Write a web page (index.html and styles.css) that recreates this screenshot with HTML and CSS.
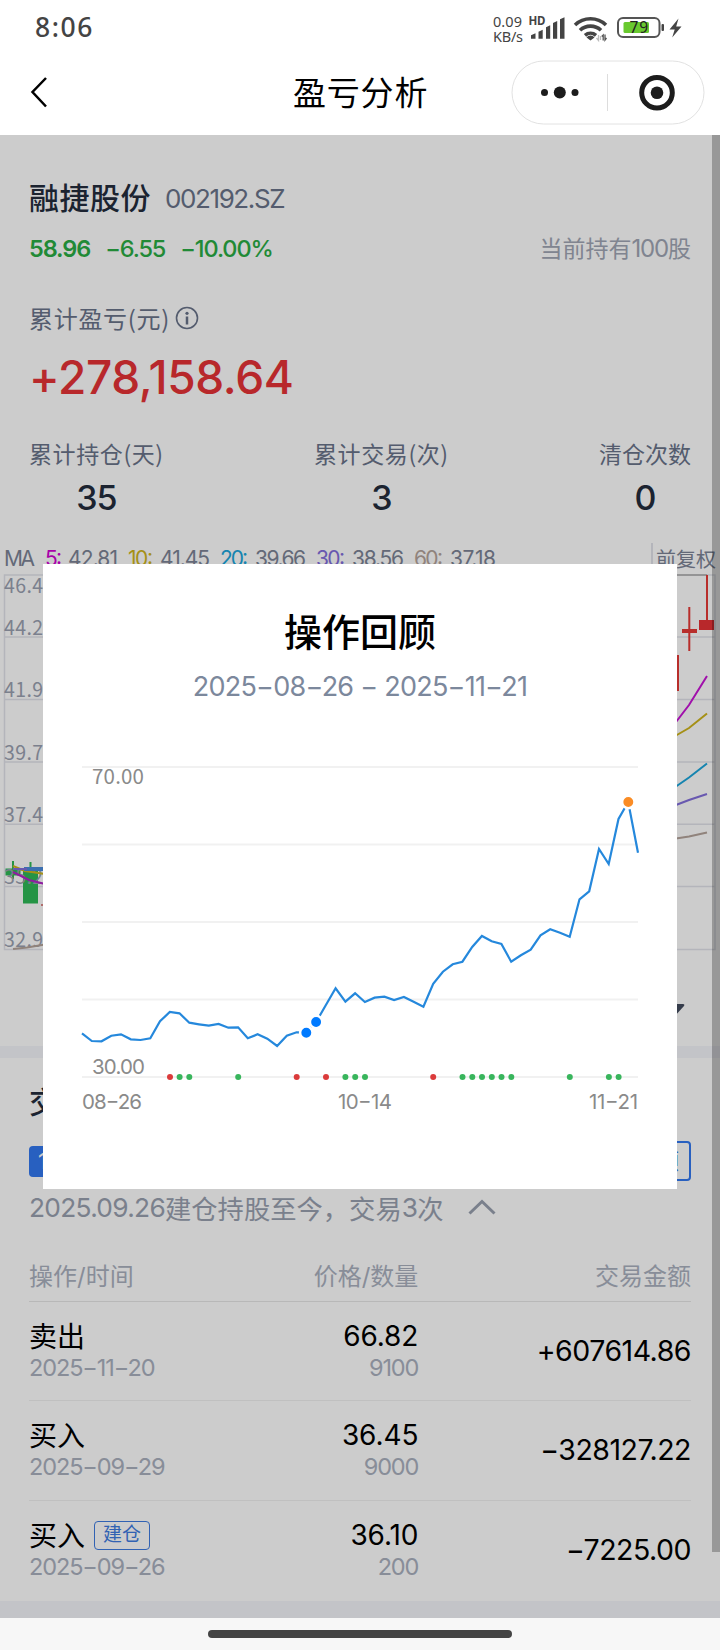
FILE: index.html
```html
<!DOCTYPE html>
<html lang="zh-CN">
<head>
    <meta charset="UTF-8">
    <title>盈亏分析</title>
    <link rel="stylesheet" href="styles.css">
</head>
<body>
<div class="status">
    <div class="time">8:06</div>
    <svg class="state" width="200" height="36" viewBox="485 8 200 36">
        <g fill="#444">
            <text x="493" y="26" font-size="14.5" textLength="29">0.09</text>
            <text x="493" y="40.5" font-size="14.5" textLength="30">KB/s</text>
            <text x="528.5" y="24" font-size="11.5" font-weight="bold" textLength="17">HD</text>
            <path d="M531 37.8v-3.500l4.500-2v5.500zM538.500 37.800v-7l4.200-2v9zM546 37.800v-11.500l4.200-2v13.500zM553 37.800v-15.800l4.200-2v17.800zM560 37.800v-19.500l4.500-2v21.500z"/>
        </g>
        <g fill="none" stroke="#444" stroke-width="3.600">
            <path d="M575 24a22.500 22.500 0 0 1 31 0"/>
            <path d="M580 29.300a15.300 15.300 0 0 1 21 0"/>
            <path d="M585 34.300a8.500 8.500 0 0 1 11 0"/>
        </g>
        <path d="M586.500 36.500a5 5 0 0 1 8 0l-4 3z" fill="#444"/>
        <path d="M598.500 34v5.500l-2-2.500M600.500 39v-4" fill="none" stroke="#bbb" stroke-width="1.300"/>
        <path d="M603.200 39.500v-5.500l-1.500 1.500M605 33.500v5.500l1.500-2" fill="none" stroke="#555" stroke-width="1.300"/>
        <rect x="618" y="17" width="41.500" height="19" rx="5" fill="#fff" stroke="#555" stroke-width="2"/>
        <rect x="623.500" y="21" width="25.500" height="11" rx="1.500" fill="#69c92f"/>
        <rect x="661.500" y="23" width="2.500" height="7" rx="1" fill="#444"/>
        <text x="629.500" y="32" font-size="15.500" fill="#222" textLength="18.500">79</text>
        <path d="M678.500 17.500L669.500 28.500h5.200l-2.500 8L681.500 25.500h-5.300z" fill="#444"/>
    </svg>
</div>
<div class="nav">
    <svg class="back" width="24" height="40" viewBox="0 0 24 40">
        <path d="M18 5L4.500 19L18 33.500" fill="none" stroke="#000" stroke-width="2.500"/>
    </svg>
    <div class="nav-title">盈亏分析</div>
    <svg class="capsule" width="194" height="66" viewBox="0 0 194 66">
        <rect x="1" y="1" width="192" height="63" rx="31.500" fill="#fff" stroke="#e2e2e2"/>
        <path d="M96.500 14v37" stroke="#ddd"/>
        <g fill="#1c1c1c">
            <circle cx="33.500" cy="32.500" r="3.500"/>
            <circle cx="48.800" cy="32.500" r="6"/>
            <circle cx="64" cy="32.500" r="3.500"/>
            <circle cx="146" cy="32.700" r="6.300"/>
        </g>
        <circle cx="146" cy="32.700" r="15.300" fill="none" stroke="#1c1c1c" stroke-width="5"/>
    </svg>
</div>

<div class="page">
    <div class="summary">
        <div class="stock"><b>融捷股份</b><span>002192.SZ</span></div>
        <div class="price">
            <span class="now">58.96</span><span class="diff">−6.55</span><span class="rate">−10.00%</span>
            <span class="hold">当前持有<em>100</em>股</span>
        </div>
        <div class="label">累计盈亏(元)
            <svg width="24" height="24" viewBox="0 0 24 24">
                <circle cx="12" cy="12" r="10.500" fill="none" stroke="#69738a" stroke-width="1.600"/>
                <circle cx="12" cy="7.300" r="1.600" fill="#69738a"/>
                <path d="M12 10.500v8" stroke="#69738a" stroke-width="2.500"/>
            </svg>
        </div>
        <div class="total">+278,158.64</div>
        <div class="stats">
            <div><p>累计持仓(天)</p><strong>35</strong></div>
            <div><p>累计交易(次)</p><strong>3</strong></div>
            <div><p>清仓次数</p><strong>0</strong></div>
        </div>
    </div>

    <svg class="kline" width="720" height="506" viewBox="0 540 720 506">
        <g font-size="21" fill="#7c8496">
            <text x="4" y="566" textLength="31">MA</text>
            <text x="45" y="566" fill="#d400d4" textLength="17">5:</text>
            <text x="68" y="566" textLength="50">42.81</text>
            <text x="128" y="566" fill="#cfb51c" textLength="25">10:</text>
            <text x="160" y="566" textLength="50">41.45</text>
            <text x="220" y="566" fill="#1ba6dc" textLength="28">20:</text>
            <text x="255" y="566" textLength="51">39.66</text>
            <text x="316" y="566" fill="#836fdc" textLength="29">30:</text>
            <text x="352" y="566" textLength="52">38.56</text>
            <text x="414" y="566" fill="#b5a49b" textLength="29">60:</text>
            <text x="450" y="566" textLength="46">37.18</text>
            <text x="656" y="567" font-size="20" textLength="60">前复权</text>
        </g>
        <g fill="none" stroke="#e2e3ea" stroke-width="1.500">
            <path d="M652 543v32" stroke-width="2"/>
            <path d="M4.500 575H715V949.500H4.500zM4.500 637H715M4.500 699.500H715M4.500 762H715M4.500 824.300H715M4.500 886.500H715"/>
        </g>
        <path d="M660 575h47" stroke="#aaa" stroke-width="1.500"/>
        <g fill="#2fb957">
            <rect x="5.500" y="868.500" width="15" height="7"/>
            <rect x="12" y="861" width="2" height="18"/>
            <rect x="23" y="871" width="15" height="32.500"/>
            <rect x="29.500" y="862" width="2" height="12"/>
        </g>
        <g class="axis" font-size="19.500" fill="#9aa1b1">
            <text x="4" y="593" textLength="39">46.4</text>
            <text x="4" y="635" textLength="39">44.2</text>
            <text x="4" y="697" textLength="39">41.9</text>
            <text x="4" y="760" textLength="39">39.7</text>
            <text x="4" y="822" textLength="39">37.4</text>
            <text x="4" y="884" textLength="39">35.2</text>
            <text x="4" y="947" textLength="39">32.9</text>
        </g>
        <g fill="none" stroke-width="2">
            <path d="M13 866l12 5l20 3" stroke="#cfb51c"/>
            <path d="M24 869h21" stroke="#4a8bdc" stroke-width="4"/>
            <path d="M13 869l14 0" stroke="#836fdc"/>
            <path d="M13 872l16 8l16 4" stroke="#b325c9"/>
            <path d="M13 949l14-1.500l18-3" stroke="#b5a49b"/>
            <path d="M41 905h5" stroke="#d88"/>
            <path d="M676 722l13-17l18-29" stroke="#c913d6"/>
            <path d="M676 735.500l13-7.500l18-14.500" stroke="#cfb51c"/>
            <path d="M676 786.500l13-9l18-14" stroke="#1ba6dc"/>
            <path d="M676 805l13-5l18-6" stroke="#836fdc"/>
            <path d="M676 838.500l13-2l18-4" stroke="#b5a49b"/>
            <path d="M678 655v36M689.300 607v44M707 575v46" stroke="#e73a36"/>
        </g>
        <rect x="682" y="629" width="15" height="4" fill="#e73a36"/>
        <rect x="699" y="620" width="15" height="10" fill="#e73336"/>
        <path d="M664 1004h19q2 0 1 2l-10 11z" fill="#434b5e"/>
    </svg>

    <div class="band"></div>

    <div class="trades">
        <h2>交易记录</h2>
        <div class="btns"><span class="tag">100股</span><span class="review">操作回顾</span></div>
        <div class="period"><em>2025.09.26</em>建仓持股至今，交易<em>3</em>次
            <svg width="28" height="16" viewBox="0 0 28 16">
                <path d="M1.500 14.500L14 2.500L26.500 14.500" fill="none" stroke="#99a1b0" stroke-width="3"/>
            </svg>
        </div>
        <div class="row head">
            <div>操作/时间</div><div>价格/数量</div><div>交易金额</div>
        </div>
        <div class="row">
            <div><p>卖出</p><time>2025−11−20</time></div>
            <div><p>66.82</p><time>9100</time></div>
            <div class="money">+607614.86</div>
        </div>
        <div class="row">
            <div><p>买入</p><time>2025−09−29</time></div>
            <div><p>36.45</p><time>9000</time></div>
            <div class="money">−328127.22</div>
        </div>
        <div class="row">
            <div><p>买入<i>建仓</i></p><time>2025−09−26</time></div>
            <div><p>36.10</p><time>200</time></div>
            <div class="money">−7225.00</div>
        </div>
    </div>
    <div class="band last"></div>
    <div class="scrollbar"></div>
    <div class="mask"></div>

    <div class="dialog">
        <h1>操作回顾</h1>
        <div class="range">2025−08−26 − 2025−11−21</div>
        <svg class="chart" width="634" height="390" viewBox="43 740 634 390">
            <path d="M82 767H638M82 844.500H638M82 922H638M82 999.500H638M82 1077H638" stroke="#f1f1f1" stroke-width="1.800"/>
            <g font-size="20.500" fill="#8a8a8a">
                <text class="axis" x="92" y="784" textLength="52">70.00</text>
                <text x="92" y="1074" textLength="53">30.00</text>
                <text x="82" y="1109" textLength="60">08−26</text>
                <text x="338" y="1109" textLength="54">10−14</text>
                <text x="589" y="1109" textLength="49">11−21</text>
            </g>
            <polyline fill="none" stroke="#2588dc" stroke-width="2.200" points="82,1033.300 91.800,1041 101.500,1041.300 111.300,1035.700 121,1034.300 130.800,1039.300 140.500,1040 150.300,1038.300 160,1021.300 169.800,1012 179.500,1013.300 189.300,1022.700 199,1024.300 208.800,1025.700 218.600,1024 228.300,1027.700 238.100,1027.300 247.800,1038.300 257.600,1034.300 267.300,1038.700 277.100,1046 286.800,1035.700 296.600,1032.300 306.300,1032.500 316.100,1022 325.900,1005 335.600,988.300 345.400,1001.700 355.100,993.300 364.900,1002 374.600,997.700 384.400,996.700 394.100,1000 403.900,997 413.600,1001.700 423.400,1006.700 433.200,983.700 442.900,971.700 452.700,964.300 462.400,961.700 472.200,947 481.900,936 491.700,941.300 501.400,944 511.200,961.700 520.900,955.300 530.700,949.700 540.500,935.300 550.200,929.300 560,932.700 569.700,936.700 579.500,899.300 589.200,891.300 599,849 608.700,864 618.500,819 628.200,802 638,852.700"/>
            <g stroke="#fff" stroke-width="2.500">
                <circle cx="306.300" cy="1032.700" r="6.200" fill="#007aff"/>
                <circle cx="316.100" cy="1022" r="6.200" fill="#007aff"/>
                <circle cx="628.300" cy="802" r="6.200" fill="#fa8c25"/>
            </g>
            <g fill="#db3b3b">
                <circle cx="170" cy="1077" r="3"/>
                <circle cx="296.700" cy="1077" r="3"/>
                <circle cx="326" cy="1077" r="3"/>
                <circle cx="433.200" cy="1077" r="3"/>
            </g>
            <g fill="#38b55c">
                <circle cx="179.600" cy="1077" r="3"/>
                <circle cx="189.300" cy="1077" r="3"/>
                <circle cx="238.200" cy="1077" r="3"/>
                <circle cx="345.400" cy="1077" r="3"/>
                <circle cx="355.200" cy="1077" r="3"/>
                <circle cx="365" cy="1077" r="3"/>
                <circle cx="462.500" cy="1077" r="3"/>
                <circle cx="472.300" cy="1077" r="3"/>
                <circle cx="482" cy="1077" r="3"/>
                <circle cx="491.800" cy="1077" r="3"/>
                <circle cx="501.500" cy="1077" r="3"/>
                <circle cx="511.300" cy="1077" r="3"/>
                <circle cx="569.800" cy="1077" r="3"/>
                <circle cx="608.900" cy="1077" r="3"/>
                <circle cx="618.600" cy="1077" r="3"/>
            </g>
        </svg>
    </div>
</div>
<div class="home"><span></span></div>
</body>
</html>
```
FILE: styles.css
```css
*{
    padding: 0;
    margin: 0;
    box-sizing: border-box;
}
body{
    width: 720px;
    height: 1650px;
    overflow: hidden;
    background: #fff;
    font-family: Inter, "Noto Sans CJK SC", sans-serif;
    font-size: 24px;
    color: #000;
}
em,i{
    font-style: normal;
}
svg{
    display: block;
}
.status{
    height: 56px;
    display: flex;
    align-items: center;
    justify-content: space-between;
    padding: 0 35px 2px 35px;
    font-family: "Noto Sans", sans-serif;
}
.time{
    font-size: 26.5px;
    font-weight: 500;
    letter-spacing: 1.6px;
    color: #444;
}
.nav{
    height: 79px;
    display: flex;
    align-items: center;
    justify-content: space-between;
    padding: 0 15px 6px 28px;
}
.nav-title{
    font-size: 33px;
    letter-spacing: .8px;
    line-height: 40px;
    margin: 0 auto 0 241px;
}
/* 页面内容 */
.page{
    position: relative;
    height: 1483px;
    background: #fff;
}
.summary{
    padding: 43px 29px 0;
    color: #69738a;
}
.stock{
    height: 40px;
    line-height: 40px;
    display: flex;
}
.stock b{
    font-size: 30px;
    font-weight: 500;
    letter-spacing: .5px;
    color: #232c3c;
}
.stock span{
    font-size: 26px;
    margin: 1px 0 0 14px;
    letter-spacing: -1.4px;
}
.price{
    display: flex;
    height: 40px;
    line-height: 40px;
    margin-top: 11px;
    font-size: 23.500px;
    color: #2aad44;
    font-weight: 500;
    letter-spacing: -1.100px;
}
.now{
    font-weight: 600;
}
.diff,.rate{
    margin-left: 15px;
}
.hold{
    margin-left: auto;
    font-size: 23px;
    font-weight: 400;
    letter-spacing: 0;
    color: #a0a6b4;
}
.hold em{
    font-size: 24px;
    letter-spacing: -1.200px;
}
.label{
    display: flex;
    align-items: center;
    gap: 5px;
    height: 30px;
    line-height: 28px;
    margin-top: 34px;
    letter-spacing: .7px;
    font-family: "Noto Sans CJK SC", sans-serif;
}
.total{
    height: 60px;
    line-height: 60px;
    margin-top: 14px;
    font-size: 46px;
    font-weight: 500;
    letter-spacing: -.35px;
    color: #e73336;
}
.stats{
    display: flex;
    justify-content: space-between;
    margin-top: 31px;
    text-align: center;
}
.stats p{
    font-family: "Noto Sans CJK SC", sans-serif;
    font-size: 23px;
    line-height: 30px;
    letter-spacing: .6px;
}
.stats div:last-child p{
    letter-spacing: 0;
}
.stats strong{
    display: block;
    margin-top: 12px;
    font-size: 34px;
    line-height: 36px;
    font-weight: 500;
    letter-spacing: -1px;
    color: #232c3c;
}
.kline{
    margin-top: 24px;
}
.axis{
    font-family: "Noto Sans CJK SC", sans-serif;
}
.band{
    height: 12px;
    background: #f4f5fb;
}
.last{
    height: 17px;
}
.trades{
    padding: 24px 29px 0;
}
.trades h2{
    height: 40px;
    line-height: 40px;
    font-size: 30px;
    font-weight: 500;
    color: #232c3c;
}
.btns{
    display: flex;
    align-items: center;
    justify-content: space-between;
    height: 40px;
    margin-top: 19px;
    font-size: 22px;
}
.tag{
    height: 31px;
    line-height: 31px;
    padding: 0 9px;
    border-radius: 4px;
    background: #3278f0;
    color: #fff;
}
.review{
    height: 40px;
    line-height: 36px;
    padding: 0 10px;
    border: 2px solid #3278f0;
    border-radius: 4px;
    color: #3278f0;
}
.period{
    display: flex;
    align-items: center;
    height: 40px;
    margin-top: 6px;
    font-size: 26.300px;
    color: #99a1b0;
}
.period em{
    letter-spacing: -.7px;
}
.period svg{
    margin-left: 24px;
}
.row{
    display: grid;
    grid-template-columns: 1fr 1fr 1fr;
    height: 100px;
    padding-top: 19px;
}
.row + .row{
    border-bottom: 1px solid #f0f0f0;
}
.row:last-child{
    border-bottom: 0;
}
.row > div{
    text-align: right;
}
.row > div:first-child{
    text-align: left;
}
.row > div:nth-child(2){
    padding-right: 52px;
}
.row p{
    display: flex;
    align-items: center;
    height: 30px;
    padding-bottom: 2px;
    font-size: 28px;
}
.row > div:nth-child(2) p{
    justify-content: flex-end;
    padding-bottom: 0;
    letter-spacing: -.1px;
}
.row time{
    display: block;
    margin-top: 2px;
    font-size: 23.500px;
    line-height: 30px;
    letter-spacing: -1.100px;
    color: #aab1bf;
}
.row i{
    margin: 2px 0 0 9px;
    width: 56px;
    height: 29px;
    line-height: 25px;
    border: 1.500px solid #3e7be0;
    border-radius: 4px;
    font-size: 19px;
    text-align: center;
    color: #3e7be0;
}
.row .money{
    font-size: 28.500px;
    line-height: 60px;
    letter-spacing: -.500px;
}
.row.head{
    height: 75px;
    padding-top: 30px;
    font-size: 24px;
    line-height: 39px;
    color: #aab1bf;
    border-bottom: 1px solid #e6e6e6;
}
.row.head + .row{
    height: 99px;
}
.scrollbar{
    position: absolute;
    top: 0;
    right: 0;
    width: 8px;
    height: 1417px;
    background: rgba(0,0,0,.25);
}
.mask{
    position: absolute;
    top: 0;
    left: 0;
    width: 100%;
    height: 100%;
    background: rgba(0,0,0,.2);
}
/* 操作回顾弹窗 */
.dialog{
    position: absolute;
    top: 429px;
    left: 43px;
    width: 634px;
    height: 625px;
    padding-top: 43px;
    background: #fff;
    text-align: center;
}
.dialog h1{
    font-size: 38px;
    font-weight: 500;
    line-height: 50px;
}
.range{
    margin-top: 15px;
    font-size: 27px;
    line-height: 30px;
    letter-spacing: -.750px;
    color: #7c889c;
}
.chart{
    margin-top: 38px;
}
.home{
    height: 32px;
    padding-top: 12px;
    background: #f7f7f7;
}
.home span{
    display: block;
    width: 304px;
    height: 8px;
    margin: 0 auto;
    border-radius: 4px;
    background: #444;
}
```
